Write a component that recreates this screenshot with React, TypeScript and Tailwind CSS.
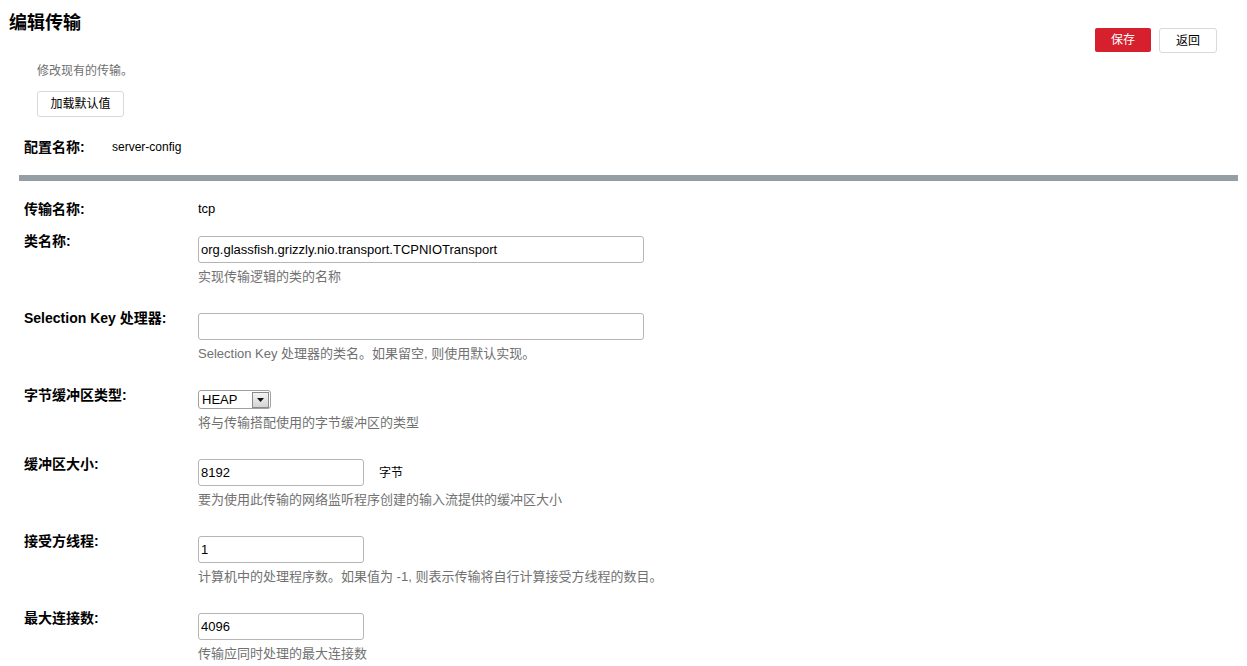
const labelCls = "w-[174px] shrink-0 text-[14px] font-bold leading-[16px] text-black"
const helpCls = "mt-[6px] text-[13px] leading-[16px] text-[#717171]"
const inputCls =
  "h-[27px] rounded-[3px] border border-[#b5b5b5] bg-white px-[2px] text-[13px] text-black outline-none"

type FieldProps = {
  label: string
  help: string
  children: React.ReactNode
}

const Field = ({ label, help, children }: FieldProps) => {
  return (
    <div className="flex items-start pl-[24px] mb-[28px]">
      <div className={labelCls + " -mt-[3px]"}>{label}</div>
      <div className="flex flex-col">
        {children}
        <div className={helpCls}>{help}</div>
      </div>
    </div>
  )
}

const App = () => {
  return (
    <div className="w-[1247px] h-[666px] overflow-hidden bg-white font-['Liberation_Sans','Noto_Sans_CJK_SC',sans-serif] text-black">
      <div className="flex items-start justify-between">
        <h1 className="pl-[9px] pt-[11px] text-[18px] font-bold leading-[24px]">编辑传输</h1>
        <div className="flex gap-[8px] pt-[28px] pr-[30px]">
          <button className="h-[24px] w-[56px] rounded-[2px] bg-[#d6202e] text-[12px] text-white">
            保存
          </button>
          <button className="h-[25px] w-[58px] rounded-[3px] border border-[#d9d9d9] bg-white text-[12px] text-black">
            返回
          </button>
        </div>
      </div>

      <div className="mt-[10px] pl-[37px] text-[12px] leading-[16px] text-[#6f6f6f]">修改现有的传输。</div>
      <div className="mt-[12px] pl-[37px]">
        <button className="h-[26px] w-[87px] rounded-[3px] border border-[#d9d9d9] bg-white text-[12px] text-black">
          加载默认值
        </button>
      </div>

      <div className="mt-[22px] flex pl-[24px] leading-[16px]">
        <div className="w-[88px] text-[14px] font-bold">配置名称:</div>
        <div className="text-[12px]">server-config</div>
      </div>

      <div className="mt-[20px] ml-[19px] mr-[9px] h-[6px] bg-[#939fa5]"></div>

      <div className="mt-[20px] flex pl-[24px] leading-[16px]">
        <div className={labelCls}>传输名称:</div>
        <div className="text-[13px]">tcp</div>
      </div>

      <div className="mt-[19px]">
        <Field label="类名称:" help="实现传输逻辑的类的名称">
          <input
            className={inputCls + " w-[446px]"}
            defaultValue="org.glassfish.grizzly.nio.transport.TCPNIOTransport"
          />
        </Field>
        <Field label="Selection Key 处理器:" help="Selection Key 处理器的类名。如果留空, 则使用默认实现。">
          <input className={inputCls + " w-[446px]"} defaultValue="" />
        </Field>
        <Field label="字节缓冲区类型:" help="将与传输搭配使用的字节缓冲区的类型">
          <div className="flex h-[19px] w-[73px] items-center justify-between rounded-[3px] border border-[#a0a0a0] bg-white pl-[3px] pr-[1px]">
            <span className="text-[13px] leading-[15px]">HEAP</span>
            <span className="flex h-[16px] w-[17px] items-center justify-center border border-[#8a8a8a] bg-gradient-to-b from-[#f4f4f4] to-[#d4d4d4]">
              <svg width="7" height="4" viewBox="0 0 7 4">
                <path d="M0 0h7L3.5 4z" fill="#111" />
              </svg>
            </span>
          </div>
        </Field>
        <Field label="缓冲区大小:" help="要为使用此传输的网络监听程序创建的输入流提供的缓冲区大小">
          <div className="flex items-center">
            <input className={inputCls + " w-[166px]"} defaultValue="8192" />
            <span className="ml-[15px] text-[12px]">字节</span>
          </div>
        </Field>
        <Field label="接受方线程:" help="计算机中的处理程序数。如果值为 -1, 则表示传输将自行计算接受方线程的数目。">
          <input className={inputCls + " w-[166px]"} defaultValue="1" />
        </Field>
        <Field label="最大连接数:" help="传输应同时处理的最大连接数">
          <input className={inputCls + " w-[166px]"} defaultValue="4096" />
        </Field>
      </div>
    </div>
  )
}

export default App
